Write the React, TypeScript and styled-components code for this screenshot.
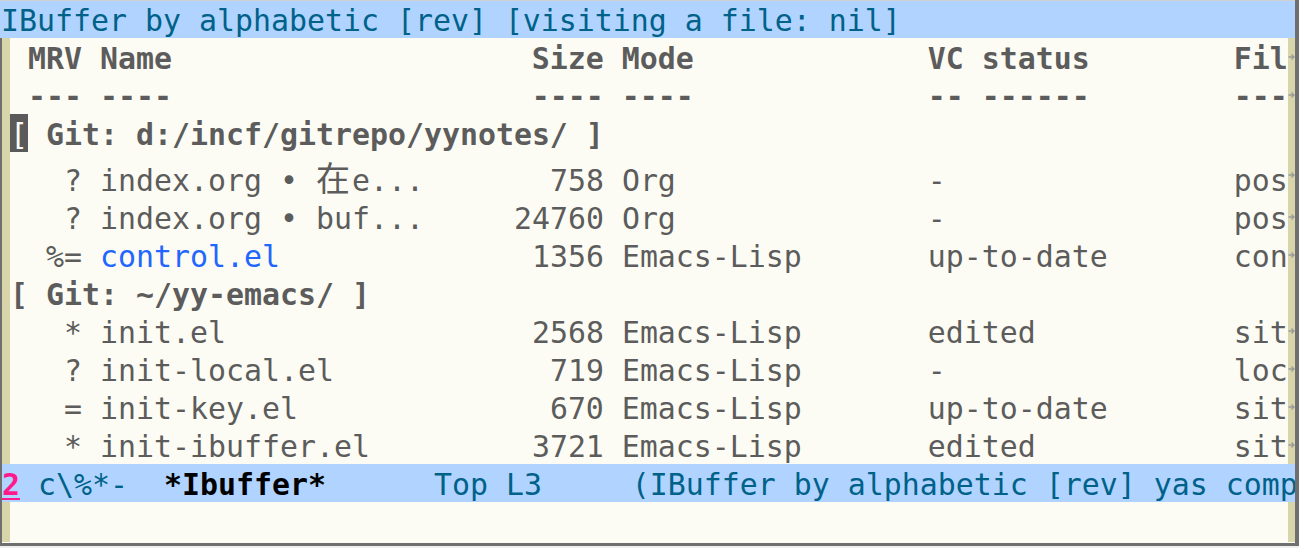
import React from 'react';
import styled, { createGlobalStyle } from 'styled-components';

const MONO = `"DejaVu Sans Mono", "Liberation Mono", "Noto Sans CJK SC", monospace`;

const GlobalStyle = createGlobalStyle`
  html, body { margin: 0; padding: 0; background: #eeeeee; }
  body { width: 1299px; height: 548px; overflow: hidden; }
`;

const Screen = styled.div`
  width: 1299px;
  height: 546px;
  box-sizing: border-box;
  display: flex;
  flex-direction: column;
  border-right: 4px solid #6f6f6f;
  border-bottom: 3px solid #6f6f6f;
  background: #fcfcf4;
  font-family: ${MONO};
  font-size: 29.9px;
`;

const HeaderLine = styled.div`
  height: 38px;
  box-sizing: border-box;
  border-top: 1px solid #d0d0d0;
  padding: 1px 0 0 1px;
  background: #b0d4ff;
  color: #006189;
  line-height: 37px;
  white-space: pre;
  overflow: hidden;
`;

const Pane = styled.div`
  flex: 1;
  display: flex;
  flex-direction: column;
  border-left: 2px solid #6f6f6f;
`;

const Line = styled.div<{ $tall?: boolean; $h?: number }>`
  display: flex;
  height: ${p => p.$h ?? (p.$tall ? 46 : 38)}px;
`;

const Fringe = styled.div<{ $w: number }>`
  width: ${p => p.$w}px;
  flex: none;
  background: #d8d5ab;
  display: flex;
  align-items: center;
  justify-content: center;
`;

const Text = styled.div<{ $tall?: boolean; $bold?: boolean }>`
  flex: 1;
  min-width: 0;
  box-sizing: border-box;
  overflow: hidden;
  white-space: pre;
  line-height: 38px;
  color: #5c5c5c;
  font-weight: ${p => (p.$bold ? 700 : 400)};
  padding-top: ${p => (p.$tall ? 8 : 2)}px;
`;

const Cursor = styled.span`
  display: inline-block;
  width: 18px;
  height: 38px;
  margin-top: -2px;
  padding-top: 2px;
  box-sizing: border-box;
  vertical-align: top;
  background: #5a5a5a;
  color: #fcfcf4;
  font-weight: 400;
`;

const Link = styled.span`
  color: #2266ff;
`;

const Wide = styled.span`
  display: inline-block;
  width: 36px;
  line-height: 1;
  font-family: "Noto Sans CJK SC", "Noto Sans CJK JP", sans-serif;
  font-size: 34px;
  text-align: left;
`;

const ModeLine = styled.div`
  height: 38px;
  box-sizing: border-box;
  padding-top: 2px;
  background: #b0d4ff;
  color: #006189;
  line-height: 38px;
  white-space: pre;
  overflow: hidden;
`;

const WinNum = styled.span`
  color: #ff1a8c;
  font-weight: 700;
  text-decoration: underline;
  text-underline-offset: 3px;
`;

const BufName = styled.span`
  color: #000000;
  font-weight: 700;
`;

const Arrow = () => (
  <svg width="7" height="8" viewBox="0 0 7 8">
    <path d="M0.5 4 H6 M3.5 1.5 L6 4 L3.5 6.5" stroke="#9a9a9a" strokeWidth="1.3" fill="none" />
  </svg>
);

const Row: React.FC<{ tall?: boolean; bold?: boolean; arrow?: boolean; children: React.ReactNode }> = ({
  tall,
  bold,
  arrow,
  children,
}) => (
  <Line $tall={tall}>
    <Fringe $w={8} />
    <Text $tall={tall} $bold={bold}>
      {children}
    </Text>
    <Fringe $w={7}>{arrow && <Arrow />}</Fringe>
  </Line>
);

type FileProps = {
  mark: string;
  name: React.ReactNode;
  nameCols: number;
  size: string;
  mode: string;
  vc: string;
  file: string;
  tall?: boolean;
};

const FileRow: React.FC<FileProps> = ({ mark, name, nameCols, size, mode, vc, file, tall }) => (
  <Row tall={tall} arrow>
    {mark}
    {name}
    {' '.repeat(Math.max(0, 23 - nameCols))}
    {size.padStart(5) + ' ' + mode.padEnd(17) + vc.padEnd(17) + file}
  </Row>
);

const files: FileProps[] = [
  {
    mark: '   ? ',
    name: (
      <>
        {'index.org • '}
        <Wide>在</Wide>
        {'e...'}
      </>
    ),
    nameCols: 18,
    size: '758',
    mode: 'Org',
    vc: '-',
    file: 'posts/emacs/index.org',
    tall: true,
  },
  { mark: '   ? ', name: 'index.org • buf...', nameCols: 18, size: '24760', mode: 'Org', vc: '-', file: 'posts/buffer/index.org' },
  { mark: '  %= ', name: <Link>control.el</Link>, nameCols: 10, size: '1356', mode: 'Emacs-Lisp', vc: 'up-to-date', file: 'config/control.el' },
];

const files2: FileProps[] = [
  { mark: '   * ', name: 'init.el', nameCols: 7, size: '2568', mode: 'Emacs-Lisp', vc: 'edited', file: 'site-lisp/init.el' },
  { mark: '   ? ', name: 'init-local.el', nameCols: 13, size: '719', mode: 'Emacs-Lisp', vc: '-', file: 'local/init-local.el' },
  { mark: '   = ', name: 'init-key.el', nameCols: 11, size: '670', mode: 'Emacs-Lisp', vc: 'up-to-date', file: 'site-lisp/init-key.el' },
  { mark: '   * ', name: 'init-ibuffer.el', nameCols: 15, size: '3721', mode: 'Emacs-Lisp', vc: 'edited', file: 'site-lisp/init-ibuffer.el' },
];

const headerCols =
  ' MRV ' + 'Name'.padEnd(23) + ' Size' + ' ' + 'Mode'.padEnd(17) + 'VC status'.padEnd(17) + 'Filename/Process';
const dashCols =
  ' --- ' + '----'.padEnd(23) + ' ----' + ' ' + '----'.padEnd(17) + '-- ------'.padEnd(17) + '----------------';

export default function App() {
  return (
    <>
      <GlobalStyle />
      <Screen>
        <HeaderLine>IBuffer by alphabetic [rev] [visiting a file: nil]</HeaderLine>
        <Pane>
          <Row bold arrow>
            {headerCols}
          </Row>
          <Row bold arrow>
            {dashCols}
          </Row>
          <Row bold>
            <Cursor>[</Cursor>
            {' Git: d:/incf/gitrepo/yynotes/ ]'}
          </Row>
          {files.map((f, i) => (
            <FileRow key={i} {...f} />
          ))}
          <Row bold>{'[ Git: ~/yy-emacs/ ]'}</Row>
          {files2.map((f, i) => (
            <FileRow key={i} {...f} />
          ))}
          <ModeLine>
            <WinNum>2</WinNum>
            {' c\\%*-  '}
            <BufName>*Ibuffer*</BufName>
            {'      Top L3     (IBuffer by alphabetic [rev] yas company)'}
          </ModeLine>
          <Line $h={40}>
            <Fringe $w={8} />
            <Text />
            <Fringe $w={7} />
          </Line>
        </Pane>
      </Screen>
    </>
  );
}
